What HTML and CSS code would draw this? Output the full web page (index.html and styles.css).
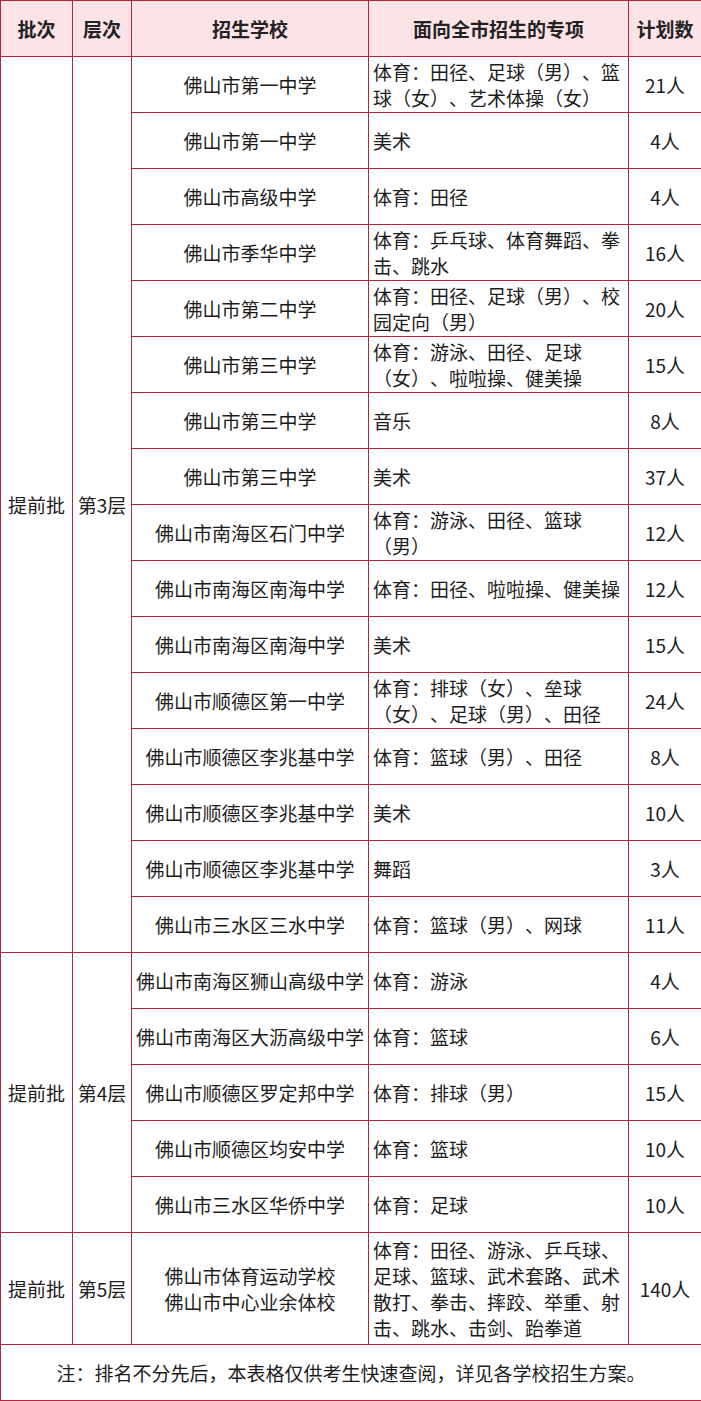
FILE: index.html
```html
<!DOCTYPE html>
<html lang="zh-CN">
<head>
<meta charset="utf-8">
<link rel="stylesheet" href="styles.css">
</head>
<body>
<table class="plan">
  <colgroup>
    <col class="c1"><col class="c2"><col class="c3"><col class="c4"><col class="c5">
  </colgroup>
  <thead>
    <tr>
      <th>批次</th><th>层次</th><th>招生学校</th><th>面向全市招生的专项</th><th>计划数</th>
    </tr>
  </thead>
  <tbody>
    <tr><td rowspan="16">提前批</td><td rowspan="16">第3层</td><td>佛山市第一中学</td><td class="item">体育：田径、足球（男）、篮球（女）、艺术体操（女）</td><td>21人</td></tr>
    <tr><td>佛山市第一中学</td><td class="item">美术</td><td>4人</td></tr>
    <tr><td>佛山市高级中学</td><td class="item">体育：田径</td><td>4人</td></tr>
    <tr><td>佛山市季华中学</td><td class="item">体育：乒乓球、体育舞蹈、拳击、跳水</td><td>16人</td></tr>
    <tr><td>佛山市第二中学</td><td class="item">体育：田径、足球（男）、校园定向（男）</td><td>20人</td></tr>
    <tr><td>佛山市第三中学</td><td class="item">体育：游泳、田径、足球（女）、啦啦操、健美操</td><td>15人</td></tr>
    <tr><td>佛山市第三中学</td><td class="item">音乐</td><td>8人</td></tr>
    <tr><td>佛山市第三中学</td><td class="item">美术</td><td>37人</td></tr>
    <tr><td>佛山市南海区石门中学</td><td class="item">体育：游泳、田径、篮球（男）</td><td>12人</td></tr>
    <tr><td>佛山市南海区南海中学</td><td class="item">体育：田径、啦啦操、健美操</td><td>12人</td></tr>
    <tr><td>佛山市南海区南海中学</td><td class="item">美术</td><td>15人</td></tr>
    <tr><td>佛山市顺德区第一中学</td><td class="item">体育：排球（女）、垒球（女）、足球（男）、田径</td><td>24人</td></tr>
    <tr><td>佛山市顺德区李兆基中学</td><td class="item">体育：篮球（男）、田径</td><td>8人</td></tr>
    <tr><td>佛山市顺德区李兆基中学</td><td class="item">美术</td><td>10人</td></tr>
    <tr><td>佛山市顺德区李兆基中学</td><td class="item">舞蹈</td><td>3人</td></tr>
    <tr><td>佛山市三水区三水中学</td><td class="item">体育：篮球（男）、网球</td><td>11人</td></tr>
    <tr><td rowspan="5">提前批</td><td rowspan="5">第4层</td><td>佛山市南海区狮山高级中学</td><td class="item">体育：游泳</td><td>4人</td></tr>
    <tr><td>佛山市南海区大沥高级中学</td><td class="item">体育：篮球</td><td>6人</td></tr>
    <tr><td>佛山市顺德区罗定邦中学</td><td class="item">体育：排球（男）</td><td>15人</td></tr>
    <tr><td>佛山市顺德区均安中学</td><td class="item">体育：篮球</td><td>10人</td></tr>
    <tr><td>佛山市三水区华侨中学</td><td class="item">体育：足球</td><td>10人</td></tr>
    <tr class="tall"><td>提前批</td><td>第5层</td><td>佛山市体育运动学校<br>佛山市中心业余体校</td><td class="item">体育：田径、游泳、乒乓球、足球、篮球、武术套路、武术散打、拳击、摔跤、举重、射击、跳水、击剑、跆拳道</td><td>140人</td></tr>
    <tr><td colspan="5" class="note">注：排名不分先后，本表格仅供考生快速查阅，详见各学校招生方案。</td></tr>
  </tbody>
</table>
</body>
</html>
```

FILE: styles.css
```css
html, body {
  margin: 0;
  padding: 0;
  background: #ffffff;
}

.plan {
  border-collapse: collapse;
  table-layout: fixed;
  width: 701px;
  font-family: "Noto Sans CJK SC", "Noto Sans", sans-serif;
  font-size: 19px;
  line-height: 26px;
  color: #1c1c1c;
  text-spacing-trim: space-all;
}

.c1 { width: 72px; }
.c2 { width: 59px; }
.c3 { width: 237px; }
.c4 { width: 260px; }
.c5 { width: 73px; }

.plan th,
.plan td {
  border: 1px solid #b4243f;
  text-align: center;
  vertical-align: middle;
  padding: 0 4px;
  height: 56px;
  box-sizing: border-box;
  overflow: hidden;
}

.plan th {
  background: #fbe3e6;
  font-weight: bold;
  color: #222222;
}

.plan td.item {
  text-align: left;
  padding: 0 3px 0 4px;
}

.plan tr.tall td {
  height: 112px;
}

.plan td.note {
  text-align: center;
}
```
